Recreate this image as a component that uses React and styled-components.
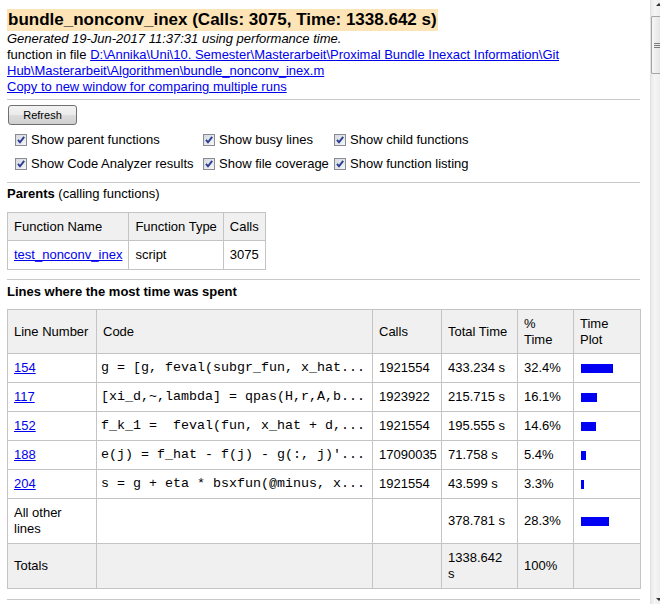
import React from 'react';
import styled, { createGlobalStyle } from 'styled-components';

const GlobalStyle = createGlobalStyle`
  html, body {
    margin: 0;
    padding: 0;
    background: #fff;
  }

  body {
    font-family: 'Liberation Sans', Arial, sans-serif;
    font-size: 13px;
    color: #000;
  }
`;

const Window = styled.div`
  display: flex;
  width: 660px;
  height: 604px;
  overflow: hidden;
`;

const Page = styled.div`
  width: 650px;
  flex: none;
  box-sizing: border-box;
  padding: 9px 10px 0 7px;
  line-height: 16px;
`;

const Title = styled.div`
  display: inline-block;
  background: #fde4b6;
  font-size: 17px;
  font-weight: bold;
  line-height: 22px;
  padding: 0 1px;
`;

const Info = styled.div`
  line-height: 16px;
  em {
    font-style: italic;
  }
`;

const Link = styled.a`
  color: #0000ee;
  text-decoration: underline;
  cursor: pointer;
`;

const Rule = styled.hr`
  border: 0;
  border-top: 1px solid #c8c8c8;
  height: 0;
  margin: ${(p) => p.$top}px 0 ${(p) => p.$bottom}px;
`;

const Button = styled.button`
  display: block;
  width: 69px;
  height: 20px;
  margin-left: 1px;
  padding: 0;
  font-family: 'Liberation Sans', Arial, sans-serif;
  font-size: 11px;
  color: #000;
  border: 1px solid #707070;
  border-radius: 3px;
  background: linear-gradient(#f2f2f2 0%, #ebebeb 50%, #dddddd 50%, #cfcfcf 100%);
`;

const Options = styled.div`
  display: grid;
  grid-template-columns: 188px 131px auto;
  margin-top: 3px;
  padding-left: 8px;
`;

const Option = styled.label`
  display: flex;
  align-items: center;
  gap: 4px;
  height: 24px;
  white-space: nowrap;
`;

const Section = styled.div`
  line-height: 16px;
  b {
    font-weight: bold;
  }
`;

const Table = styled.table`
  border-collapse: collapse;
  margin-top: ${(p) => p.$top}px;
  ${(p) => (p.$fixed ? 'table-layout: fixed; width: 633px;' : '')}

  th, td {
    border: 1px solid #c4c4c4;
    padding: 6px;
    line-height: 16px;
    text-align: left;
    vertical-align: middle;
    font-weight: normal;
    white-space: nowrap;
  }

  th {
    padding: 6px 6px 5px;
    background: #f0f0f0;
  }
`;

const Col = styled.col`
  width: ${(p) => p.$w}px;
`;

const TotalsRow = styled.tr`
  td {
    background: #f0f0f0;
  }
`;

const Code = styled.td`
  font-family: 'Liberation Mono', 'Courier New', monospace;
  font-size: 13.33px;
  white-space: pre !important;
  padding-left: 4px !important;
`;

const Bar = styled.div`
  height: 9px;
  margin-left: 1px;
  background: #0000f2;
`;

const Scrollbar = styled.div`
  width: 10px;
  flex: none;
  display: flex;
  flex-direction: column;
  box-sizing: border-box;
  background: linear-gradient(90deg, #e9e9e9, #f5f5f5 40%, #ededed);
  border-left: 1px solid #e2e2e2;
`;

const Arrow = styled.div`
  width: 0;
  height: 0;
  margin: ${(p) => (p.$down ? '0 0 3px 5px' : '3px 0 0 5px')};
  border-left: 3px solid transparent;
  border-right: 3px solid transparent;
  ${(p) => (p.$down ? 'border-top: 3px solid #333;' : 'border-bottom: 3px solid #333;')}
`;

const Thumb = styled.div`
  margin-top: 10px;
  height: 56px;
  display: flex;
  flex-direction: column;
  justify-content: center;
  gap: 1px;
  padding-left: 2px;
  border: 1px solid #a4a4a4;
  border-right: 0;
  border-radius: 2px 0 0 2px;
  background: linear-gradient(90deg, #f7f7f7, #e4e4e4);
`;

const Grip = styled.span`
  display: block;
  width: 7px;
  height: 1px;
  background: #7a7a7a;
`;

const Spacer = styled.div`
  flex: 1;
`;

const CheckBox = () => (
  <svg width="12" height="12" viewBox="0 0 12 12">
    <defs>
      <linearGradient id="cbfill" x1="0" y1="0" x2="1" y2="1">
        <stop offset="0" stopColor="#d4d7df" />
        <stop offset="1" stopColor="#f6f7fa" />
      </linearGradient>
    </defs>
    <rect x="0.5" y="0.5" width="11" height="11" fill="url(#cbfill)" stroke="#8a8c94" />
    <path d="M3 5.8 L5 8.3 L9.2 2.8" fill="none" stroke="#2b3d8f" strokeWidth="1.9" />
  </svg>
);

const options = [
  'Show parent functions',
  'Show busy lines',
  'Show child functions',
  'Show Code Analyzer results',
  'Show file coverage',
  'Show function listing',
];

const lines = [
  { line: '154', code: 'g = [g, feval(subgr_fun, x_hat...', calls: '1921554', time: '433.234 s', pct: 32.4 },
  { line: '117', code: '[xi_d,~,lambda] = qpas(H,r,A,b...', calls: '1923922', time: '215.715 s', pct: 16.1 },
  { line: '152', code: 'f_k_1 =  feval(fun, x_hat + d,...', calls: '1921554', time: '195.555 s', pct: 14.6 },
  { line: '188', code: "e(j) = f_hat - f(j) - g(:, j)'...", calls: '17090035', time: '71.758 s', pct: 5.4 },
  { line: '204', code: 's = g + eta * bsxfun(@minus, x...', calls: '1921554', time: '43.599 s', pct: 3.3 },
];

const App = () => (
  <Window>
    <GlobalStyle />
    <Page>
      <Title>bundle_nonconv_inex (Calls: 3075, Time: 1338.642 s)</Title>
      <Info>
        <em>Generated 19-Jun-2017 11:37:31 using performance time.</em>
      </Info>
      <Info>
        function in file{' '}
        <Link>
          D:\Annika\Uni\10. Semester\Masterarbeit\Proximal Bundle Inexact Information\Git
          Hub\Masterarbeit\Algorithmen\bundle_nonconv_inex.m
        </Link>
      </Info>
      <Info>
        <Link>Copy to new window for comparing multiple runs</Link>
      </Info>

      <Rule $top={4} $bottom={5} />
      <Button type="button">Refresh</Button>
      <Options>
        {options.map((o) => (
          <Option key={o}>
            <CheckBox />
            {o}
          </Option>
        ))}
      </Options>

      <Rule $top={6} $bottom={3} />
      <Section>
        <b>Parents</b> (calling functions)
      </Section>
      <Table $top={10}>
        <thead>
          <tr>
            <th>Function Name</th>
            <th>Function Type</th>
            <th>Calls</th>
          </tr>
        </thead>
        <tbody>
          <tr>
            <td><Link>test_nonconv_inex</Link></td>
            <td>script</td>
            <td>3075</td>
          </tr>
        </tbody>
      </Table>

      <Rule $top={9} $bottom={4} />
      <Section>
        <b>Lines where the most time was spent</b>
      </Section>
      <Table $top={9} $fixed>
        <colgroup>
          <Col $w={89} />
          <Col $w={276} />
          <Col $w={69} />
          <Col $w={76} />
          <Col $w={56} />
          <Col $w={67} />
        </colgroup>
        <thead>
          <tr>
            <th>Line Number</th>
            <th>Code</th>
            <th>Calls</th>
            <th>Total Time</th>
            <th>%<br />Time</th>
            <th>Time<br />Plot</th>
          </tr>
        </thead>
        <tbody>
          {lines.map((l) => (
            <tr key={l.line}>
              <td><Link>{l.line}</Link></td>
              <Code>{l.code}</Code>
              <td>{l.calls}</td>
              <td>{l.time}</td>
              <td>{l.pct.toFixed(1)}%</td>
              <td><Bar style={{ width: Math.round(l.pct) }} /></td>
            </tr>
          ))}
          <tr>
            <td>All other<br />lines</td>
            <td />
            <td />
            <td>378.781 s</td>
            <td>28.3%</td>
            <td><Bar style={{ width: 28 }} /></td>
          </tr>
          <TotalsRow>
            <td>Totals</td>
            <td />
            <td />
            <td>1338.642<br />s</td>
            <td>100%</td>
            <td />
          </TotalsRow>
        </tbody>
      </Table>
      <Rule $top={10} $bottom={0} />
    </Page>
    <Scrollbar>
      <Arrow />
      <Thumb>
        <Grip />
        <Grip />
        <Grip />
      </Thumb>
      <Spacer />
      <Arrow $down />
    </Scrollbar>
  </Window>
);

export default App;
